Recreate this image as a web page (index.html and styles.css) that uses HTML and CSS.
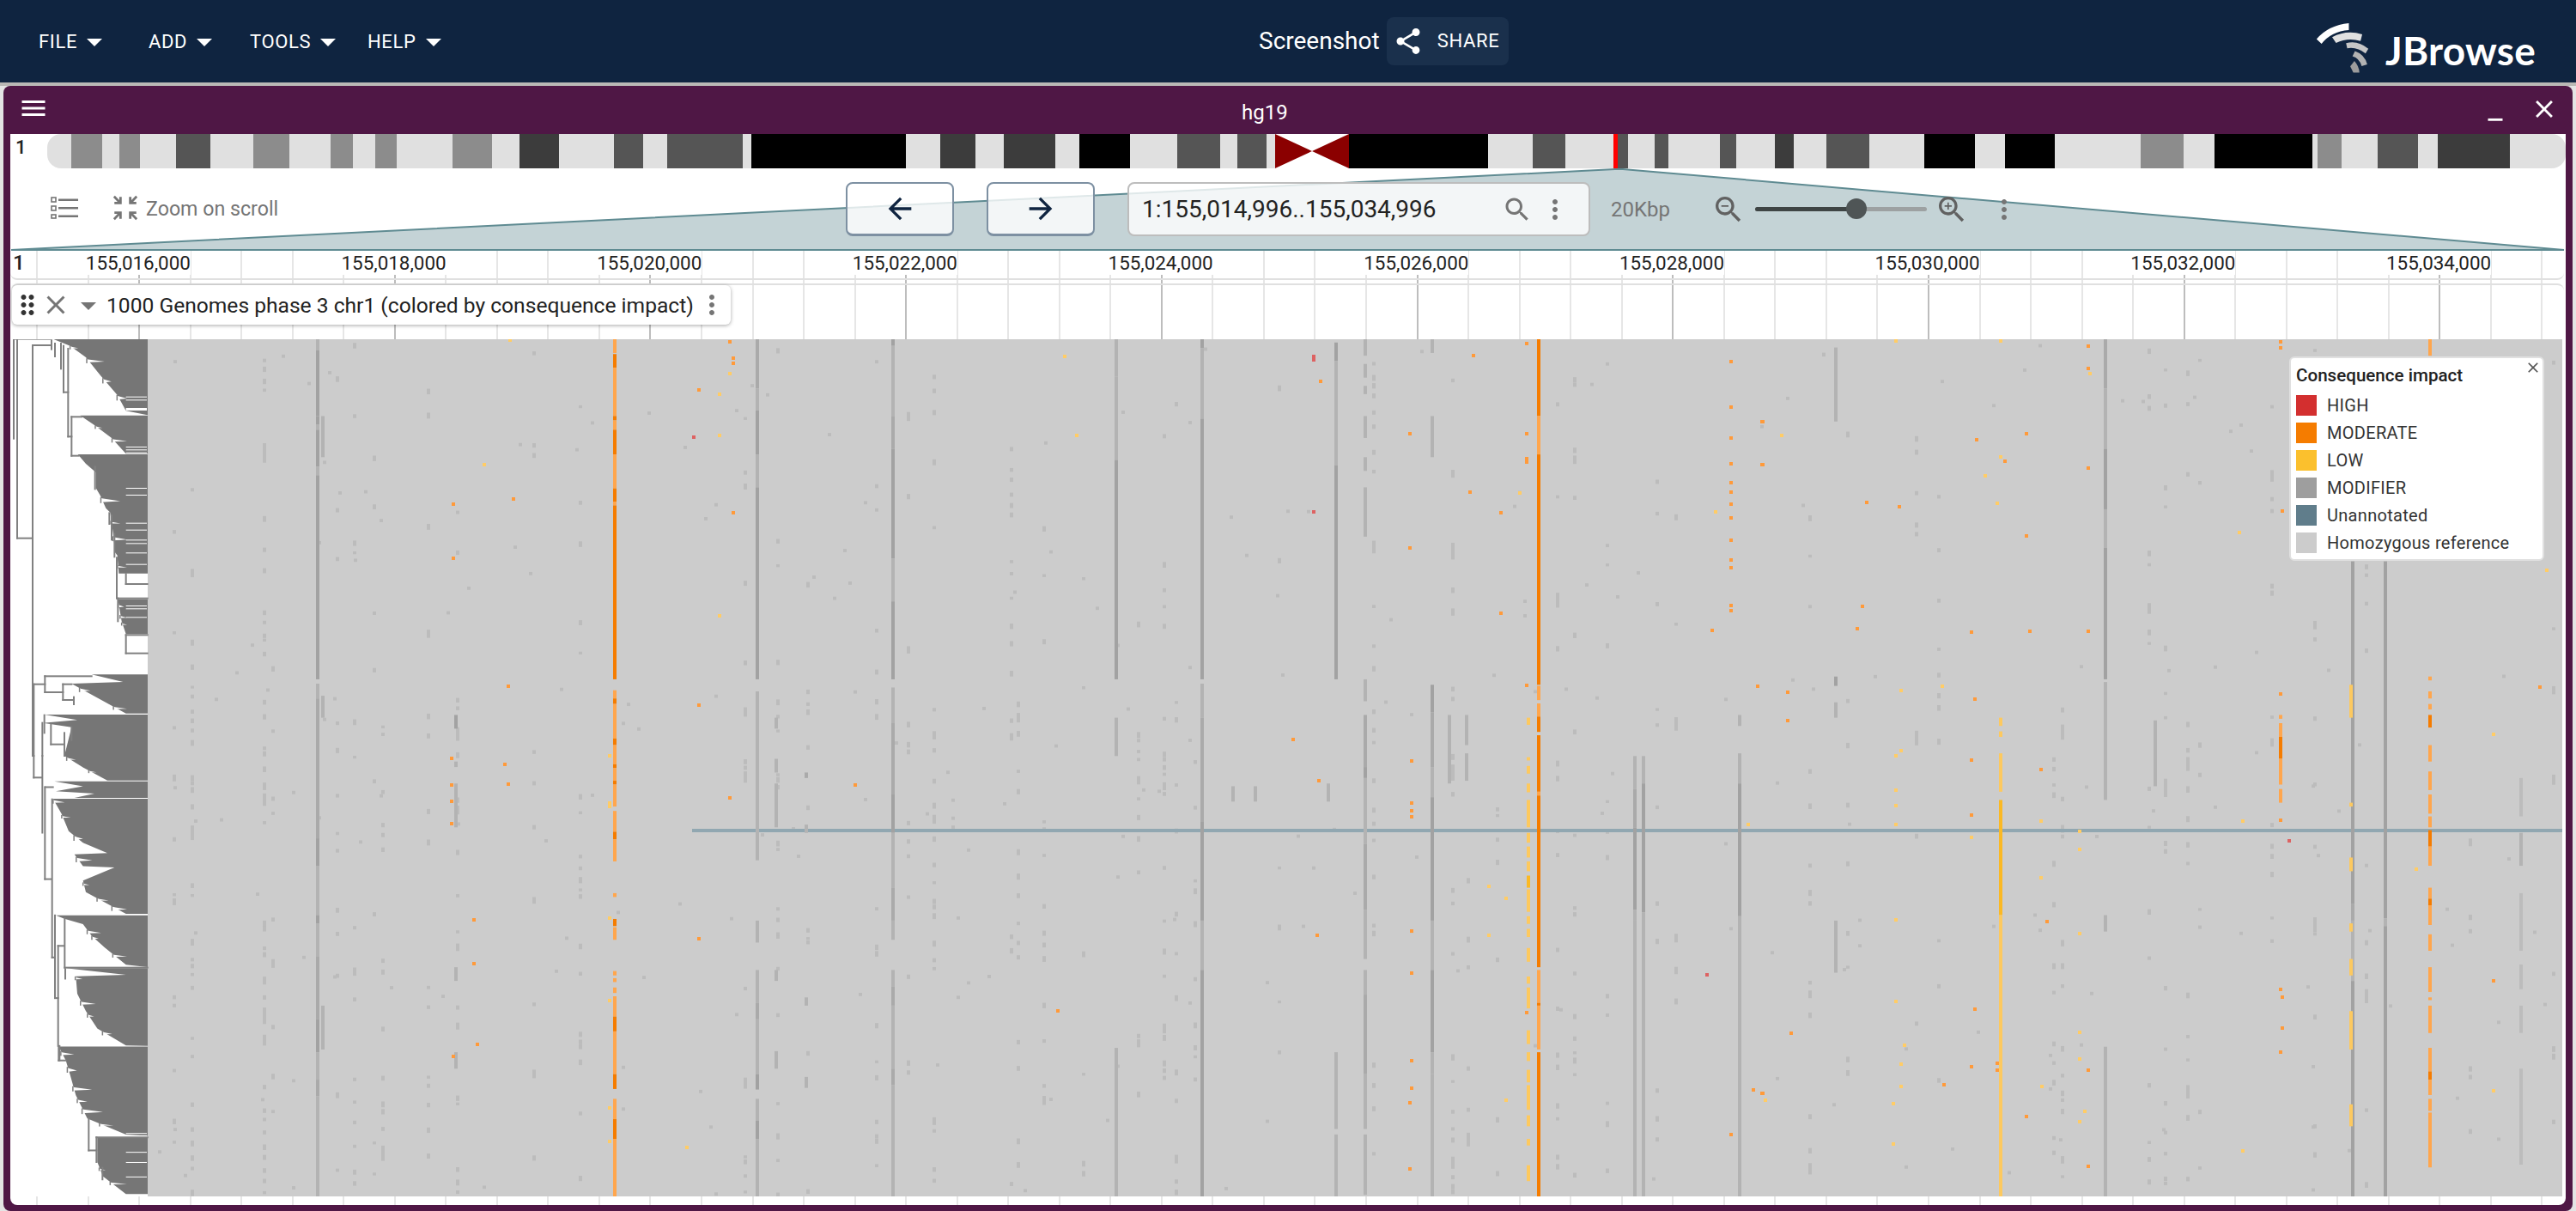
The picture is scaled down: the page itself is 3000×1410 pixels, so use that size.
FILE: index.html
```html
<!DOCTYPE html>
<html lang="en">
<head>
    <meta charset="UTF-8">
    <title>JBrowse - Screenshot</title>
    <link rel="stylesheet" href="styles.css">
</head>
<body>
    <header class="appbar">
        <nav class="appbar-menu">
            <button class="menu-button">FILE <span class="caret"></span></button>
            <button class="menu-button">ADD <span class="caret"></span></button>
            <button class="menu-button">TOOLS <span class="caret"></span></button>
            <button class="menu-button">HELP <span class="caret"></span></button>
        </nav>
        <div class="session">
            <span class="session-name">Screenshot</span>
            <button class="share-button">
                <svg class="icon-share" viewBox="0 0 24 24"><path d="M18 16.08c-.76 0-1.44.3-1.96.77L8.91 12.7c.05-.23.09-.46.09-.7s-.04-.47-.09-.7l7.05-4.11c.54.5 1.25.81 2.04.81 1.66 0 3-1.34 3-3s-1.34-3-3-3-3 1.34-3 3c0 .24.04.47.09.7L8.04 9.81C7.5 9.31 6.79 9 6 9c-1.66 0-3 1.34-3 3s1.34 3 3 3c.79 0 1.5-.31 2.04-.81l7.12 4.16c-.05.21-.08.43-.08.65 0 1.61 1.31 2.92 2.92 2.92s2.92-1.31 2.92-2.92-1.31-2.92-2.92-2.92z"/></svg>
                SHARE
            </button>
        </div>
        <div class="logo">
            <svg class="logo-mark" viewBox="280 75 190 185">
                <path fill="#ffffff" d="M282 135Q325 85 398 78L398 103Q335 108 300 152Z"/>
                <path fill="#e0e0e0" d="M338 128Q390 100 446 118L440 142Q395 128 352 149Z"/>
                <path fill="#c6c6c6" d="M388 150Q430 138 468 170L458 187Q428 162 392 168Z"/>
                <path fill="#b2b2b2" d="M420 178Q455 190 464 226L444 232Q436 204 411 197Z"/>
                <path fill="#9c9c9c" d="M418 214Q434 232 436 255L414 255L403 233Z"/>
            </svg>
            <span class="logo-text">JBrowse</span>
        </div>
    </header>

    <main class="view">
        <div class="view-title">
            <svg class="icon-menu" viewBox="0 0 24 24"><path d="M3 18h18v-2H3v2zm0-5h18v-2H3v2zm0-7v2h18V6H3z"/></svg>
            <span class="view-name">hg19</span>
            <svg class="icon-window" viewBox="0 0 24 24"><path d="M6 19h12v2H6z"/></svg>
            <svg class="icon-window" viewBox="0 0 24 24"><path d="M19 6.41 17.59 5 12 10.59 6.41 5 5 6.41 10.59 12 5 17.59 6.41 19 12 13.41 17.59 19 19 17.59 13.41 12z"/></svg>
        </div>

        <div class="view-body">
            <!-- Chromosome overview -->
            <div class="ideogram-row">
                <span class="ideogram-name">1</span>
                <svg class="ideogram" viewBox="55 0 2933 40">
                    <defs><clipPath id="ideoClip"><path d="M71 0H2972A16 16 0 0 1 2988 16V24A16 16 0 0 1 2972 40H1571V0ZM1485 0V40H71A16 16 0 0 1 55 24V16A16 16 0 0 1 71 0Z"/></clipPath></defs>
                    <g clip-path="url(#ideoClip)">
                        <rect class="band-light" x="55" width="2933" height="40"/>
                        <rect class="band-mid" x="83" width="36" height="40"/>
                        <rect class="band-mid" x="139" width="24" height="40"/>
                        <rect class="band-dark" x="205" width="40" height="40"/>
                        <rect class="band-mid" x="295" width="42" height="40"/>
                        <rect class="band-mid" x="385" width="26" height="40"/>
                        <rect class="band-mid" x="437" width="25" height="40"/>
                        <rect class="band-mid" x="527" width="46" height="40"/>
                        <rect class="band-darker" x="605" width="46" height="40"/>
                        <rect class="band-dark" x="715" width="34" height="40"/>
                        <rect class="band-dark" x="777" width="88" height="40"/>
                        <rect class="band-black" x="875" width="180" height="40"/>
                        <rect class="band-darker" x="1095" width="41" height="40"/>
                        <rect class="band-darker" x="1169" width="60" height="40"/>
                        <rect class="band-black" x="1257" width="59" height="40"/>
                        <rect class="band-dark" x="1371" width="50" height="40"/>
                        <rect class="band-dark" x="1441" width="34" height="40"/>
                        <rect class="band-black" x="1571" width="162" height="40"/>
                        <rect class="band-dark" x="1785" width="38" height="40"/>
                        <rect class="band-dark" x="1884" width="12" height="40"/>
                        <rect class="band-dark" x="1927" width="16" height="40"/>
                        <rect class="band-dark" x="2003" width="19" height="40"/>
                        <rect class="band-darker" x="2067" width="22" height="40"/>
                        <rect class="band-dark" x="2127" width="50" height="40"/>
                        <rect class="band-black" x="2241" width="59" height="40"/>
                        <rect class="band-black" x="2335" width="58" height="40"/>
                        <rect class="band-mid" x="2493" width="50" height="40"/>
                        <rect class="band-black" x="2579" width="114" height="40"/>
                        <rect class="band-mid" x="2699" width="28" height="40"/>
                        <rect class="band-dark" x="2769" width="47" height="40"/>
                        <rect class="band-darker" x="2839" width="84" height="40"/>
                    </g>
                    <path class="centromere" d="M1485 0L1528 20L1485 40ZM1571 0L1528 20L1571 40Z"/>
                    <rect class="band-here" x="1879" width="5" height="40"/>
                </svg>
            </div>

            <!-- Navigation bar -->
            <div class="toolbar">
                <svg class="overview" viewBox="12 196 2976 97">
                    <path d="M13 291L1881 197L1890 197L2986 291Z"/>
                </svg>
                <div class="toolbar-left">
                    <svg class="icon-tracks" viewBox="0 0 32 26">
                        <rect x="1" y="1" width="5" height="5"/><rect x="1" y="11" width="5" height="5"/><rect x="1" y="21" width="5" height="4"/>
                        <path d="M9 2.5h23v2.5H9zM9 12h23v2.5H9zM9 21.5h23v2.5H9z"/>
                    </svg>
                    <svg class="icon-scroll" viewBox="0 0 24 24"><path d="M9 9V3H7v2.59L3.41 2 2 3.41 5.59 7H3v2zm12 0V7h-2.59L22 3.41 20.59 2 17 5.59V3h-2v6zM3 15v2h2.59L2 20.59 3.41 22 7 18.41V21h2v-6zm12 0v6h2v-2.59L20.59 22 22 20.59 18.41 17H21v-2z"/></svg>
                    <span class="scroll-label">Zoom on scroll</span>
                </div>
                <div class="toolbar-center">
                    <button class="nav-button"><svg viewBox="0 0 24 24"><path d="M20 11H7.83l5.59-5.59L12 4l-8 8 8 8 1.41-1.41L7.83 13H20v-2z"/></svg></button>
                    <button class="nav-button"><svg viewBox="0 0 24 24"><path d="m12 4-1.41 1.41L16.17 11H4v2h12.17l-5.58 5.59L12 20l8-8z"/></svg></button>
                    <div class="search-box">
                        <span class="search-text">1:155,014,996..155,034,996</span>
                        <svg class="icon-search" viewBox="0 0 24 24"><path d="M15.5 14h-.79l-.28-.27C15.41 12.59 16 11.11 16 9.5 16 5.91 13.09 3 9.5 3S3 5.91 3 9.5 5.91 16 9.5 16c1.61 0 3.09-.59 4.23-1.57l.27.28v.79l5 4.99L20.49 19l-4.99-5zm-6 0C7.01 14 5 11.99 5 9.5S7.01 5 9.5 5 14 7.01 14 9.5 11.99 14 9.5 14z"/></svg>
                        <svg class="icon-more" viewBox="0 0 24 24"><path d="M12 8c1.1 0 2-.9 2-2s-.9-2-2-2-2 .9-2 2 .9 2 2 2zm0 2c-1.1 0-2 .9-2 2s.9 2 2 2 2-.9 2-2-.9-2-2-2zm0 6c-1.1 0-2 .9-2 2s.9 2 2 2 2-.9 2-2-.9-2-2-2z"/></svg>
                    </div>
                    <span class="bp-label">20Kbp</span>
                    <svg class="icon-zoom" viewBox="0 0 24 24"><path d="M15.5 14h-.79l-.28-.27C15.41 12.59 16 11.11 16 9.5 16 5.91 13.09 3 9.5 3S3 5.91 3 9.5 5.91 16 9.5 16c1.61 0 3.09-.59 4.23-1.57l.27.28v.79l5 4.99L20.49 19l-4.99-5zm-6 0C7.01 14 5 11.99 5 9.5S7.01 5 9.5 5 14 7.01 14 9.5 11.99 14 9.5 14zM7 9h5v1H7z"/></svg>
                    <div class="slider"><div class="slider-fill"></div><div class="slider-thumb"></div></div>
                    <svg class="icon-zoom" viewBox="0 0 24 24"><path d="M15.5 14h-.79l-.28-.27C15.41 12.59 16 11.11 16 9.5 16 5.91 13.09 3 9.5 3S3 5.91 3 9.5 5.91 16 9.5 16c1.61 0 3.09-.59 4.23-1.57l.27.28v.79l5 4.99L20.49 19l-4.99-5zm-6 0C7.01 14 5 11.99 5 9.5S7.01 5 9.5 5 14 7.01 14 9.5 11.99 14 9.5 14zM12 10h-2v2H9v-2H7V9h2V7h1v2h2v1z"/></svg>
                    <svg class="icon-more" viewBox="0 0 24 24"><path d="M12 8c1.1 0 2-.9 2-2s-.9-2-2-2-2 .9-2 2 .9 2 2 2zm0 2c-1.1 0-2 .9-2 2s.9 2 2 2 2-.9 2-2-.9-2-2-2zm0 6c-1.1 0-2 .9-2 2s.9 2 2 2 2-.9 2-2-.9-2-2-2z"/></svg>
                </div>
            </div>

            <!-- Ruler and track share the gridlines -->
            <div class="scale">
                <div class="ruler">
                    <span class="ruler-name">1</span>
                    <div class="tick"><span>155,016,000</span></div>
                    <div class="tick"><span>155,018,000</span></div>
                    <div class="tick"><span>155,020,000</span></div>
                    <div class="tick"><span>155,022,000</span></div>
                    <div class="tick"><span>155,024,000</span></div>
                    <div class="tick"><span>155,026,000</span></div>
                    <div class="tick"><span>155,028,000</span></div>
                    <div class="tick"><span>155,030,000</span></div>
                    <div class="tick"><span>155,032,000</span></div>
                    <div class="tick"><span>155,034,000</span></div>
                </div>
                <div class="track">
                    <div class="track-label">
                        <svg class="icon-drag" viewBox="0 0 24 24"><path d="M11 18c0 1.1-.9 2-2 2s-2-.9-2-2 .9-2 2-2 2 .9 2 2zm-2-8c-1.1 0-2 .9-2 2s.9 2 2 2 2-.9 2-2-.9-2-2-2zm0-6c-1.1 0-2 .9-2 2s.9 2 2 2 2-.9 2-2-.9-2-2-2zm6 4c1.1 0 2-.9 2-2s-.9-2-2-2-2 .9-2 2 .9 2 2 2zm0 2c-1.1 0-2 .9-2 2s.9 2 2 2 2-.9 2-2-.9-2-2-2zm0 6c-1.1 0-2 .9-2 2s.9 2 2 2 2-.9 2-2-.9-2-2-2z"/></svg>
                        <svg class="icon-close" viewBox="0 0 24 24"><path d="M19 6.41 17.59 5 12 10.59 6.41 5 5 6.41 10.59 12 5 17.59 6.41 19 12 13.41 17.59 19 19 17.59 13.41 12z"/></svg>
                        <span class="caret caret-gray"></span>
                        <span class="track-name">1000 Genomes phase 3 chr1 (colored by consequence impact)</span>
                        <svg class="icon-more" viewBox="0 0 24 24"><path d="M12 8c1.1 0 2-.9 2-2s-.9-2-2-2-2 .9-2 2 .9 2 2 2zm0 2c-1.1 0-2 .9-2 2s.9 2 2 2 2-.9 2-2-.9-2-2-2zm0 6c-1.1 0-2 .9-2 2s.9 2 2 2 2-.9 2-2-.9-2-2-2z"/></svg>
                    </div>
                    <canvas id="matrix" class="matrix" width="2969" height="998"></canvas>
                    <div class="legend">
                        <svg class="legend-close" viewBox="0 0 24 24"><path d="M19 6.41 17.59 5 12 10.59 6.41 5 5 6.41 10.59 12 5 17.59 6.41 19 12 13.41 17.59 19 19 17.59 13.41 12z"/></svg>
                        <div class="legend-title">Consequence impact</div>
                        <div class="legend-row"><span class="swatch swatch-high"></span>HIGH</div>
                        <div class="legend-row"><span class="swatch swatch-moderate"></span>MODERATE</div>
                        <div class="legend-row"><span class="swatch swatch-low"></span>LOW</div>
                        <div class="legend-row"><span class="swatch swatch-modifier"></span>MODIFIER</div>
                        <div class="legend-row"><span class="swatch swatch-unannotated"></span>Unannotated</div>
                        <div class="legend-row"><span class="swatch swatch-ref"></span>Homozygous reference</div>
                    </div>
                </div>
            </div>
        </div>
    </main>

    <script src="app.js"></script>
</body>
</html>
```
FILE: styles.css
```css
:root {
    --appbar: #0f2440;
    --view: #4f1745;
    --text-gray: #757575;
    --grid-light: #e6e6e6;
    --grid-dark: #bdbdbd;
}

* {
    margin: 0;
    padding: 0;
    box-sizing: border-box;
}

html, body {
    height: 1410px;
    overflow: hidden;
}

body {
    font-family: Roboto, sans-serif;
    background: #e4e4e4;
    color: #222;
}

button {
    font-family: inherit;
    border: none;
    background: none;
}

/* App bar */
.appbar {
    height: 96px;
    background: var(--appbar);
    color: #fff;
    box-shadow: 0 4px 0 #b9b8b5;
    display: grid;
    grid-template-columns: 1466px auto 1fr;
    align-items: center;
}

.appbar-menu {
    display: grid;
    grid-template-columns: 128px 118px 137px auto;
    padding-left: 45px;
}

.menu-button {
    color: #fff;
    font-size: 22px;
    font-weight: 400;
    letter-spacing: 0.03em;
    display: flex;
    align-items: center;
    gap: 11px;
}

.caret {
    width: 0;
    height: 0;
    border-left: 9px solid transparent;
    border-right: 9px solid transparent;
    border-top: 9px solid #fff;
    margin-top: 3px;
}

.caret-gray {
    border-top-color: #757575;
    margin-top: 2px;
}

.session {
    display: flex;
    align-items: center;
    gap: 8px;
    margin-top: -1px;
}

.session-name {
    font-size: 28px;
}

.share-button {
    width: 142px;
    height: 56px;
    color: #fff;
    background: #1a304c;
    border-radius: 8px;
    font-size: 22px;
    font-weight: 400;
    letter-spacing: 0.03em;
    display: flex;
    align-items: center;
    gap: 16px;
    padding-left: 7px;
}

.icon-share {
    width: 36px;
    height: 36px;
    fill: #fff;
}

.logo {
    justify-self: end;
    display: flex;
    align-items: flex-end;
    gap: 18px;
    padding-right: 47px;
    margin-top: 16px;
}

.logo-mark {
    width: 64px;
    height: 60px;
}

.logo-text {
    font-family: Lato, sans-serif;
    font-size: 46px;
    font-weight: 700;
    line-height: 46px;
    letter-spacing: 0.2px;
    margin-bottom: 4px;
}

/* View frame */
.view {
    margin: 4px 4px 0;
    height: 1310px;
    background: var(--view);
    border-radius: 8px;
    padding: 0 8px 7px;
    display: flex;
    flex-direction: column;
}

.view-title {
    height: 56px;
    flex: none;
    display: flex;
    align-items: flex-start;
    color: #fff;
}

.icon-menu {
    width: 36px;
    height: 36px;
    fill: #fff;
    margin: 8px 0 0 9px;
}

.view-name {
    font-size: 24px;
    line-height: 56px;
    margin-left: 1389px;
    padding-top: 3px;
}

.icon-window {
    width: 34px;
    height: 34px;
    fill: #fff;
    margin-top: 11px;
}

.view-name + .icon-window {
    margin-left: auto;
    margin-right: 23px;
}

.view-name + .icon-window + .icon-window {
    margin-right: 8px;
    margin-top: 10px;
}

.view-body {
    flex: 1;
    background: #fff;
    border-radius: 0 0 8px 8px;
    overflow: hidden;
    display: flex;
    flex-direction: column;
}

/* Ideogram */
.ideogram-row {
    height: 40px;
    flex: none;
    display: flex;
}

.ideogram-name {
    width: 43px;
    font-size: 22px;
    font-weight: 500;
    line-height: 32px;
    padding-left: 6px;
    color: #222;
}

.ideogram {
    width: 2933px;
    height: 40px;
}

.band-light { fill: #e0e0e0; }
.band-mid { fill: #8c8c8c; }
.band-dark { fill: #555; }
.band-darker { fill: #3c3c3c; }
.band-black { fill: #000; }
.band-here { fill: #f00; }
.centromere { fill: #8b0000; }

/* Toolbar */
.toolbar {
    height: 96px;
    flex: none;
    position: relative;
    display: flex;
    align-items: flex-start;
}

.overview {
    position: absolute;
    left: 0;
    top: 0;
    width: 2976px;
    height: 97px;
}

.overview path {
    fill: #c4d3d6;
    stroke: #5f8b92;
    stroke-width: 2;
}

.toolbar-left {
    position: relative;
    width: 973px;
    flex: none;
    display: flex;
    align-items: center;
    height: 94px;
    padding-left: 47px;
}

.icon-tracks {
    width: 32px;
    height: 26px;
    margin-top: -2px;
}

.icon-tracks rect {
    fill: #fff;
    stroke: #757575;
    stroke-width: 1.6;
}

.icon-tracks path {
    fill: #757575;
}

.icon-scroll {
    width: 34px;
    height: 34px;
    fill: #757575;
    margin: -2px 0 0 38px;
}

.scroll-label {
    font-size: 23.2px;
    color: var(--text-gray);
    margin-left: 7px;
}

.toolbar-center {
    position: relative;
    display: flex;
    align-items: center;
    padding-top: 16px;
}

.toolbar-center > svg {
    flex: none;
}

.nav-button {
    width: 126px;
    height: 63px;
    margin-right: 38px;
    background: rgba(255, 255, 255, 0.8);
    border: 2px solid #7d90a2;
    border-bottom-width: 3px;
    border-radius: 8px;
    display: flex;
    align-items: center;
    justify-content: center;
}

.nav-button svg {
    width: 40px;
    height: 40px;
    fill: #0f2440;
}

.search-box {
    width: 539px;
    height: 63px;
    background: rgba(255, 255, 255, 0.8);
    border: 2px solid #bdbdbd;
    border-radius: 8px;
    display: flex;
    align-items: center;
    padding-left: 15px;
}

.search-text {
    font-size: 28px;
    color: #222;
    flex: 1;
}

.icon-search {
    width: 36px;
    height: 36px;
    fill: #757575;
    margin-right: 8px;
}

.icon-more {
    width: 36px;
    height: 36px;
    fill: #757575;
    flex: none;
}

.search-box .icon-more {
    margin-right: 21px;
}

.bp-label {
    font-size: 24px;
    color: var(--text-gray);
    margin: 0 48px 0 24px;
}

.icon-zoom {
    width: 40px;
    height: 40px;
    fill: #616161;
}

.slider {
    width: 200px;
    height: 5px;
    background: #9da1a2;
    border-radius: 3px;
    margin: 0 9px 0 11px;
    position: relative;
}

.slider-fill {
    width: 118px;
    height: 5px;
    background: #3f4545;
    border-radius: 3px;
}

.slider-thumb {
    position: absolute;
    left: 106px;
    top: -10px;
    width: 24px;
    height: 24px;
    background: #4f5556;
    border-radius: 50%;
}

.slider + .icon-zoom {
    margin-right: 23px;
}

/* Ruler and tracks */
.scale {
    flex: 1;
    background:
        repeating-linear-gradient(90deg, transparent 0, transparent 149px, var(--grid-dark) 149px, var(--grid-dark) 151px, transparent 151px, transparent 297.7px) 0 28px / 100% 75px no-repeat,
        repeating-linear-gradient(90deg, transparent 0, transparent 30px, var(--grid-light) 30px, var(--grid-light) 32px, transparent 32px, transparent 59.54px);
    display: flex;
    flex-direction: column;
}

.ruler {
    height: 34px;
    flex: none;
    display: flex;
    position: relative;
    border-bottom: 2px solid #e0e0e0;
    border-radius: 0 0 8px 8px;
    margin-right: 2px;
    overflow: hidden;
}

.ruler-name {
    position: absolute;
    left: 1px;
    top: 0;
    background: #fff;
    font-size: 24px;
    font-weight: 500;
    line-height: 28px;
    padding: 0 2px;
    z-index: 1;
}

.tick {
    width: 297.7px;
    flex: none;
    text-align: center;
}

.tick span {
    display: inline-block;
    height: 28px;
    background: #fff;
    font-size: 22.4px;
    line-height: 28px;
    color: #222;
}

.track {
    flex: 1;
    margin: 4px 2px 0 1px;
    border-top: 2px solid #e0e0e0;
    border-radius: 8px 8px 0 0;
    position: relative;
    padding: 63px 0 0 2px;
}

.track-label {
    position: absolute;
    left: 1px;
    top: 0;
    height: 46px;
    width: 837px;
    background: #fff;
    border-radius: 6px;
    box-shadow: 0 1px 4px rgba(0, 0, 0, 0.35);
    display: flex;
    align-items: center;
    z-index: 2;
}

.icon-drag {
    width: 36px;
    height: 36px;
    fill: #333;
    flex: none;
}

.icon-close {
    width: 36px;
    height: 36px;
    fill: #757575;
    flex: none;
    margin-left: -3px;
}

.track-label .caret {
    margin: 2px 12px 0 11px;
}

.track-name {
    font-size: 24.6px;
    white-space: nowrap;
    flex: 1;
}

.track-label .icon-more {
    margin-right: 4px;
}

.matrix {
    display: block;
}

.legend {
    position: absolute;
    left: 2653px;
    top: 83px;
    width: 297px;
    height: 238px;
    background: #fff;
    border: 2px solid #e0e0e0;
    border-radius: 6px;
    padding-left: 6px;
}

.legend-close {
    position: absolute;
    right: 1px;
    top: 1px;
    width: 20px;
    height: 20px;
    fill: #555;
}

.legend-title {
    font-size: 20.6px;
    font-weight: 500;
    line-height: 40px;
    height: 39px;
    color: #212121;
}

.legend-row {
    height: 32px;
    display: flex;
    align-items: center;
    font-size: 20px;
    letter-spacing: 0.3px;
    gap: 12px;
    color: #333;
}

.swatch {
    width: 24px;
    height: 24px;
    flex: none;
}

.swatch-high { background: #d32f2f; }
.swatch-moderate { background: #f57c00; }
.swatch-low { background: #fbc02d; }
.swatch-modifier { background: #9e9e9e; }
.swatch-unannotated { background: #607d8b; }
.swatch-ref { background: #cccccc; }
```
FILE: app.js
```js
// Draws the dendrogram and the genotype matrix onto one canvas.
// All data below is measured off the page: x is a page x, py is a row
// position on a 1566px tall scale covering the matrix height.
const canvas = document.getElementById('matrix');
const ctx = canvas.getContext('2d');
const LEFT = 15, TOP = 395, TREE_RIGHT = 172, RIGHT = 2984, BOTTOM = 1393;

const rowY = py => TOP + py / 1.566;

ctx.translate(-LEFT, -TOP);

// Small seeded generator so every render is the same
let seed = 20240611;
function rand() {
    seed = (seed + 0x6D2B79F5) | 0;
    let t = Math.imul(seed ^ (seed >>> 15), 1 | seed);
    t = (t + Math.imul(t ^ (t >>> 7), 61 | t)) ^ t;
    return ((t ^ (t >>> 14)) >>> 0) / 4294967296;
}

const COLORS = {
    D: '#a2a2a2', M: '#aaaaaa', L: '#b3b3b3', S: '#bcbcbc',
    O: '#f57c00', P: '#ffa64d', Y: '#fdc95f', Z: '#fbb924',
    dotOrange: '#ff9a3a', dotYellow: '#ffcc66', dotRed: '#dd6262',
    hline: '#91a7b1'
};

function bar(x, w, color, py0, py1) {
    ctx.fillStyle = color;
    ctx.fillRect(x, rowY(py0), w, (py1 - py0) / 1.566);
}

function drawSpecks() {
    // [page x, specks above the row gap, specks below it]
    const tracks = [
        [201, 2, 12], [222, 6, 32], [306, 14, 36], [316, 1, 8], [391, 3, 10], [411, 4, 14],
        [434, 4, 4], [444, 0, 14], [497, 5, 12], [531, 2, 22], [620, 3, 8], [674, 5, 18],
        [866, 6, 10], [904, 4, 20], [939, 1, 12], [1019, 6, 12], [1056, 5, 10], [1086, 5, 22],
        [1176, 12, 6], [1184, 0, 20], [1214, 3, 12], [1260, 1, 5], [1324, 1, 14], [1354, 5, 18],
        [1368, 1, 12], [1390, 0, 10], [1488, 2, 4], [1598, 12, 14], [1690, 10, 22], [1708, 0, 6],
        [1742, 0, 7], [1812, 4, 12], [1832, 7, 12], [1870, 2, 8], [1928, 3, 8], [1950, 2, 5],
        [2106, 3, 12], [2150, 1, 8], [2230, 6, 3], [2256, 6, 6], [2390, 0, 14], [2400, 0, 18],
        [2501, 8, 8], [2520, 5, 14], [2546, 3, 18], [2560, 2, 6], [2644, 5, 10], [2694, 3, 8],
        [2754, 4, 6], [2875, 4, 6], [2972, 2, 8]
    ];
    tracks.forEach(([x, top, bottom]) => {
        for (let i = 0; i < top; i++) speck(x, rand() * 610);
        for (let i = 0; i < bottom; i++) speck(x, 630 + rand() * 930);
    });
    // loose background noise
    for (let i = 0; i < 240; i++) {
        const x = TREE_RIGHT + Math.floor(rand() * 468) * 6;
        const py = rand() * 1560;
        bar(x, 4, COLORS.S, py, py + 6);
    }
}

function speck(x, py) {
    const h = rand() > 0.94 ? 14 + rand() * 14 : 5 + rand() * 6;
    bar(x, 4, COLORS.S, py, py + h);
}

function drawColumns() {
    const gray = [
        [368, 'L0-20 D20-140 D140-155 L155-165 D165-232 L232-248 D248-620 L628-655 M655-910 D910-960 L960-1050 D1050-1065 L1065-1125 M1125-1240 D1240-1300 L1300-1350 M1350-1380 L1380-1566'],
        [880, 'M0-90 L90-130 D130-210 L210-270 D270-620 L642-950 L1060-1100 L1150-1210 M1210-1240 L1240-1340 D1340-1368 L1385-1425 D1425-1458 L1458-1566'],
        [1038, 'D0-12 L12-140 M140-200 D200-400 L400-478 D478-620 L635-700 M700-830 D830-900 L900-1000 M1000-1060 L1060-1095 L1150-1180 M1180-1215 L1215-1330 M1330-1360 L1360-1566'],
        [1298, 'L0-68 L68-220 D220-620 L690-760 L1292-1566'],
        [1398, 'D0-16 L16-145 D145-620 L628-690 M690-880 D880-1060 L1060-1150 D1150-1566'],
        [1554, 'D6-40 L40-230 D230-620 L1300-1440 L1450-1566'],
        [1588, 'L0-30 L45-70 L85-100 L140-180 L215-240 L270-360 L620-660 M685-780 D780-800 L800-920 M920-1040 L1040-1130 L1150-1195 M1195-1340 L1340-1440 L1450-1560'],
        [1666, 'L0-25 L140-215 D630-680 M680-780 L780-835 D835-1060 L1060-1150 D1150-1300 L1300-1340 L1340-1566'],
        [1902, 'L760-820 M820-890 D890-1040 L1040-1060 L1060-1566'],
        [1912, 'L760-810 D810-1045 L1045-1566'],
        [2024, 'L685-705 L755-810 D810-1052 L1052-1566'],
        [2136, 'L15-150 D615-632 L662-690 L1060-1155'],
        [2450, 'M0-90 L90-200 D200-310 L310-380 D380-620 L625-840 L1050-1080 L1290-1566'],
        [2738, 'D405-1030 M1030-1060 L1060-1170 D1170-1566'],
        [2776, 'D405-1056 L1056-1070 D1070-1566'],
        [2934, 'S800-870 L900-960 S1010-1115 S1140-1185 S1215-1265 S1330-1505']
    ];
    gray.forEach(([x, spec]) => drawSegments(x, spec));

    [
        [374, 'L140-215 L650-690 L1215-1295'],
        [529, 'D685-710 L770-780 L810-890 L1145-1170 L1300-1330'],
        [902, 'L690-710 L765-790 L810-890 L1150-1170 L1298-1330'],
        [937, 'M790-800 L885-900 L1200-1215 L1345-1365'],
        [1686, 'L685-810'],
        [1706, 'L685-740 L755-805'],
        [1434, 'L815-843'],
        [1460, 'L815-843'],
        [1545, 'L810-843'],
        [2508, 'L695-815']
    ].forEach(([x, spec]) => drawSegments(x, spec));

    drawSegments(714, 'P0-25 O27-52 P52-140 O140-148 P148-165 O165-210 P210-272 O272-296 P296-303 O303-620 P640-655 O655-665 P665-728 O728-740 P740-775 O775-782 P782-805 O805-812 P812-852 P860-898 O898-912 P912-952 P1010-1017 O1057-1070 P1072-1095 P1152-1160 P1165-1172 P1182-1192 P1198-1235 O1235-1262 P1262-1340 O1340-1367 P1385-1422 O1422-1458 P1458-1566');
    drawSegments(1790, 'O0-140 P140-210 O210-630 P632-658 P664-688 O688-716 O722-825 P825-832 O832-1145 P1150-1210 O1210-1215 P1215-1295 O1300-1566');
    drawSegments(1778, 'Y690-703 Y762-768 Y778-792 Y810-826 Y840-890 Y900-918 Y925-945 Y952-970 Z978-1000 Y1003-1044 Y1052-1066 Y1075-1090 Y1110-1135 Y1162-1175 Y1182-1220 Y1260-1285 Y1300-1316 Y1332-1355 Y1360-1405 Y1415-1435 Y1458-1470 Y1506-1535');
    drawSegments(2328, 'Y690-705 Y715-725 Y755-825 Z840-1050 Y1050-1566');
    drawSegments(2654, 'P685-692 P700-725 O725-765 P765-812 P820-845');
    drawSegments(2828, 'P0-30 P615-622 P642-655 P665-675 O685-708 P740-770 P788-822 P830-865 P870-890 O895-925 P925-960 P1000-1020 O1020-1032 P1032-1068 P1085-1115 P1145-1190 P1200-1205 P1215-1265 P1292-1335 O1335-1350 P1350-1378 P1385-1407 P1410-1510');
    drawSegments(2736, 'Y630-690 Y845-852 Y945-970 Y1065-1080 Y1130-1160 Y1225-1295 Y1395-1435');
}

function drawSegments(x, spec) {
    spec.split(' ').forEach(part => {
        const [a, b] = part.slice(1).split('-').map(Number);
        bar(x, 4, COLORS[part[0]], a, b);
    });
}

function drawDots() {
    // coloured calls, [page x offset base, colour, [[zoom px, py]...]]
    const dots = [
        [172, COLORS.dotOrange, [[1059,92],[1125,35],[1125,44],[1125,316],[587,301],[703,291],[587,399],[693,633],[1059,667],[584,764],[686,775],[693,811],[584,813],[584,842],[1119,837],[584,884],[627,1058],[1059,1093],[627,1138],[633,1285],[587,1307],[1119,4],[1360,812]]],
        [172, COLORS.dotYellow, [[696,2],[1118,63],[1099,100],[1099,176],[646,229],[1099,505],[888,759],[888,845],[888,852],[888,1056],[888,1206],[888,1401],[888,1462],[1036,1473]]],
        [172, COLORS.dotRed, [[1049,178]]],
        [1120, COLORS.dotOrange, [[983,29],[690,76],[861,173],[1086,173],[1086,217],[1086,224],[976,278],[1036,317],[861,381],[1036,500],[1479,40],[1479,124],[1539,150],[1479,180],[1479,227],[1539,229],[1479,262],[1479,278],[1479,301],[1479,326],[1479,367],[1479,403],[1479,417],[1479,485],[1479,495],[1442,531],[1529,633],[1086,631],[637,729],[686,805],[865,769],[865,845],[865,860],[865,870],[865,1079],[683,1087],[865,1155],[185,1225],[1086,1227],[865,1315],[865,1366],[861,1392],[861,1513],[1479,1450],[1521,1369],[1539,1375],[1086,8]]],
        [1120, COLORS.dotYellow, [[198,31],[221,175],[1072,281],[1448,315],[1013,998],[1046,1019],[1013,1087],[1046,1388],[1512,885],[1545,1388]]],
        [1120, COLORS.dotRed, [[676,32],[676,38],[676,314],[1432,1159]]],
        [2050, COLORS.dotOrange, [[3,150],[3,228],[204,297],[267,306],[416,183],[511,172],[471,222],[630,13],[630,54],[630,235],[511,358],[1003,313],[197,487],[187,528],[406,534],[518,533],[630,532],[1000,4],[1000,16],[52,644],[52,696],[412,656],[1000,646],[406,768],[406,868],[1000,877],[540,785],[1498,634],[1409,1170],[551,1061],[412,1221],[59,1265],[1000,1186],[1003,1200],[1003,1256],[1000,1300],[406,1327],[353,1359],[630,1333],[3,1375],[511,1418],[630,1508],[455,1320],[455,1333]]],
        [2050, COLORS.dotYellow, [[260,3],[462,3],[633,63],[42,176],[462,215],[432,249],[455,299],[920,352],[270,640],[350,632],[260,760],[270,750],[1409,721],[260,822],[260,850],[260,885],[540,879],[927,879],[406,909],[613,898],[613,930],[1261,967],[540,982],[260,1058],[613,1084],[260,1207],[277,1288],[270,1322],[613,1264],[613,1313],[270,1362],[541,1363],[255,1393],[10,1388],[624,1408],[613,1427],[255,1467],[927,1480],[1409,1370],[1512,421]]],
        [2050, COLORS.dotRed, [[1016,915]]]
    ];
    dots.forEach(([base, color, list]) => {
        ctx.fillStyle = color;
        list.forEach(([px, py]) => ctx.fillRect(Math.round(base + px / 1.65) - 2, Math.round(rowY(py)) - 2, 4, 4));
    });
}

// --- dendrogram ---
// traced off two crops: z5 rows map to y = 380 + py / 3, z6 to y = 880 + py / 2.96
const z5 = ([x, y]) => [x / 3, 380 + y / 3];
const z6 = ([x, y]) => [x / 3, 880 + y / 2.96];

function drawTree() {
    ctx.fillStyle = '#fff';
    ctx.fillRect(LEFT, TOP, TREE_RIGHT - LEFT, BOTTOM - TOP);

    const clades = [
        [[180,42],[245,68],[300,108],[350,170],[410,240],[440,295],[515,310]].map(z5),
        [[280,311],[330,345],[390,390],[440,445],[515,445]].map(z5),
        [[272,447],[300,480],[335,510],[335,565],[350,590],[370,635],[385,650],[395,720],[402,790],[410,800],[415,863],[515,863]].map(z5),
        [[412,953],[425,1030],[440,1075],[515,1075]].map(z5),
        [[320,1216],[430,1242],[250,1248],[440,1352],[515,1352]].map(z5),
        [[155,1356],[270,1375],[150,1385],[250,1400],[225,1500],[515,1500]].map(z5),
        [[225,0],[290,40],[375,85],[515,85]].map(z6),
        [[190,88],[290,105],[195,122],[330,130],[260,145],[515,145]].map(z6),
        [[185,148],[215,200],[240,260],[290,300],[375,335],[260,340],[290,380],[400,385],[290,430],[300,470],[440,545],[515,545]].map(z6),
        [[195,550],[225,562],[290,580],[320,620],[365,660],[440,720],[515,728]].map(z6),
        [[230,732],[440,755],[265,760],[270,820],[300,880],[340,940],[440,998],[515,1000]].map(z6),
        [[205,1002],[230,1050],[245,1100],[265,1170],[305,1250],[440,1305],[515,1310]].map(z6),
        [[340,1316],[340,1400],[360,1450],[440,1510],[515,1510]].map(z6)
    ];
    const wedges = [];
    clades.forEach(points => {
        const right = points[points.length - 1];
        ctx.fillStyle = '#767676';
        ctx.beginPath();
        ctx.moveTo(points[0][0], points[0][1]);
        points.forEach(p => ctx.lineTo(p[0], p[1]));
        ctx.lineTo(TREE_RIGHT, right[1]);
        ctx.lineTo(TREE_RIGHT, points[0][1]);
        ctx.closePath();
        ctx.fill();
        // serrate the sloped edges
        for (let i = 1; i < points.length; i++) {
            const [x0, y0] = points[i - 1], [x1, y1] = points[i];
            const steps = Math.floor((y1 - y0) / 12);
            if (x1 <= x0) continue;
            for (let s = 0; s < steps; s++) {
                const t = (s + rand() * 0.6) / Math.max(steps, 1);
                wedges.push([x0 + (x1 - x0) * t, y0 + (y1 - y0) * t]);
            }
        }
    });

    wedges.forEach(([x, y]) => {
        const len = 6 + rand() * 18, h = 1.5 + rand() * 3.5;
        ctx.fillStyle = '#fff';
        ctx.beginPath();
        ctx.moveTo(x - 1, y);
        ctx.lineTo(Math.min(x + len, TREE_RIGHT - 24), y + 1 + h * 0.5);
        ctx.lineTo(x - 1, y + h);
        ctx.closePath();
        ctx.fill();
        ctx.fillStyle = '#808080';
        ctx.fillRect(x - 1.5, y - 1, 1.5, h + 2);
    });

    // thin white gaps that reach the matrix (py, height in page px)
    ctx.fillStyle = '#fff';
    [[245,1],[256,1],[285,3],[420,1],[430,1],[440,1],[564,1],[588,1],[686,1],[710,1],[745,1],[757,1],[790,1],[830,1],[975,1],[985,1],[1015,1]]
        .forEach(([py, h]) => {
            const [x, y] = z5([440, py]);
            ctx.fillRect(x, y, TREE_RIGHT - x - 1, h);
        });
    [[1300,1],[1308,1],[1365,1],[1400,1],[1450,1]].forEach(([py, h]) => {
        const [x, y] = z6([440, py]);
        ctx.fillRect(x, y, TREE_RIGHT - x - 1, h);
    });

    const lines5 = [
        [48,42,48,392],[48,44,180,44],[60,48,60,740],[60,740,112,740],[114,66,114,1500],[114,66,180,66],
        [180,50,180,80],[192,60,192,105],[213,60,213,148],[222,68,222,230],[222,230,238,230],[238,78,238,385],
        [238,385,250,385],[250,316,250,452],[250,316,285,316],[250,452,275,452],[332,490,332,568],[382,652,382,690],
        [390,660,390,745],[400,725,400,805],[408,808,408,950],[410,950,515,950],[412,950,412,1030],[440,865,440,900],
        [440,900,515,900],[440,1078,440,1142],[440,1142,515,1142],[440,1078,515,1078],[118,1250,118,1500],[118,1250,157,1250],
        [157,1222,157,1278],[157,1278,220,1278],[157,1222,320,1222],[220,1250,220,1305],[220,1250,250,1250],[220,1305,258,1305],
        [258,1295,258,1320],[148,1385,148,1500],[155,1358,155,1420],[178,1390,178,1460],[178,1460,225,1460],[225,1420,225,1500],
        [250,1400,250,1445]
    ];
    const lines6 = [
        [118,0,118,75],[118,75,145,75],[148,0,148,265],[158,108,185,108],[157,108,157,425],[157,425,180,425],
        [182,150,182,695],[182,695,192,695],[192,550,192,835],[192,835,203,835],[203,655,203,1000],[203,655,225,655],
        [226,560,226,730],[226,730,515,730],[228,735,228,768],[205,1000,208,1050],[205,1050,230,1050],
        [310,1250,310,1360],[310,1360,337,1360],[337,1315,337,1400],[337,1315,515,1315],[358,1420,358,1460]
    ];
    ctx.fillStyle = '#808080';
    const stroke = (a, b) => {
        ctx.fillRect(a[0] - 1, a[1] - 1, Math.max(b[0] - a[0], 0) + 2, Math.max(b[1] - a[1], 0) + 2);
    };
    lines5.forEach(l => stroke(z5([l[0], l[1]]), z5([l[2], l[3]])));
    lines6.forEach(l => stroke(z6([l[0], l[1]]), z6([l[2], l[3]])));
}

// --- matrix ---
ctx.fillStyle = '#cccccc';
ctx.fillRect(TREE_RIGHT, TOP, RIGHT - TREE_RIGHT, BOTTOM - TOP);
drawSpecks();
ctx.fillStyle = COLORS.hline;
ctx.fillRect(806, 965, RIGHT - 806, 4);
drawColumns();
drawDots();
drawTree();
```
